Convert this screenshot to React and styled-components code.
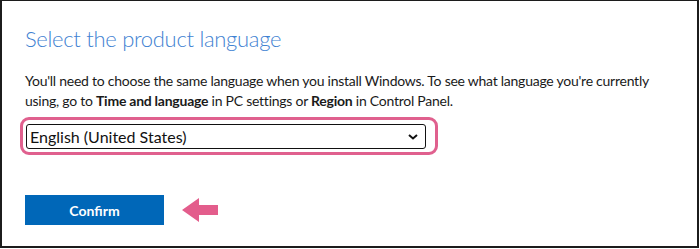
import React, { useState } from 'react'
import styled, { createGlobalStyle } from 'styled-components'

const GlobalStyle = createGlobalStyle`
  html, body {
    margin: 0;
    padding: 0;
    background: #ffffff;
  }
  body {
    font-family: Lato, "Liberation Sans", sans-serif;
  }
`

const Frame = styled.div`
  box-sizing: border-box;
  width: 699px;
  height: 248px;
  border: 2px solid #1c1c1c;
  border-top-width: 1px;
  background: #fff;
  padding: 23px 4px 0 23px;
`

const Title = styled.h1`
  margin: 0 0 17px;
  font-size: 22px;
  font-weight: 300;
  color: #3f82d2;
  line-height: 30px;
  letter-spacing: -0.3px;
`

const Text = styled.p`
  margin: 0;
  font-size: 14px;
  line-height: 20px;
  letter-spacing: -0.25px;
  color: #1a1a1a;

  b {
    font-weight: 700;
  }
`

const Highlight = styled.div`
  display: inline-block;
  margin: 6px 0 0 -5px;
  padding: 4px 9px 3px 3px;
  border: 3px solid #e0608e;
  border-radius: 9px;
`

const Select = styled.select`
  display: block;
  box-sizing: border-box;
  width: 400px;
  height: 25px;
  padding: 0 18px 0 3px;
  border: 1.5px solid #111;
  border-radius: 3px;
  background: #fff url("data:image/svg+xml;utf8,<svg xmlns='http://www.w3.org/2000/svg' width='10' height='6'><path d='M1 1l4 3.5L9 1' fill='none' stroke='%23111' stroke-width='2'/></svg>") no-repeat right 7px center;
  appearance: none;
  font-family: Lato, "Liberation Sans", sans-serif;
  font-size: 16px;
  color: #111;
`

const Actions = styled.div`
  display: flex;
  align-items: center;
  gap: 18px;
  margin-top: 40px;
`

const Button = styled.button`
  width: 139px;
  height: 30px;
  border: none;
  background: #0067b8;
  color: #fff;
  font-family: Lato, "Liberation Sans", sans-serif;
  font-size: 14px;
  font-weight: 700;
  cursor: pointer;
`

const Arrow = () => (
  <svg width="36" height="26" viewBox="0 0 36 26">
    <polygon points="0,13 17,1 17,8 36,8 36,18 17,18 17,25" fill="#e35d8c" />
  </svg>
)

export default function App() {
  const [lang, setLang] = useState('en-us')

  return (
    <>
      <GlobalStyle />
      <Frame>
        <Title>Select the product language</Title>
        <Text>
          You'll need to choose the same language when you install Windows. To see what language you're currently
          <br />
          using, go to <b>Time and language</b> in PC settings or <b>Region</b> in Control Panel.
        </Text>
        <Highlight>
          <Select value={lang} onChange={(e) => setLang(e.target.value)}>
            <option value="en-us">English (United States)</option>
            <option value="en-gb">English International</option>
          </Select>
        </Highlight>
        <Actions>
          <Button>Confirm</Button>
          <Arrow />
        </Actions>
      </Frame>
    </>
  )
}
